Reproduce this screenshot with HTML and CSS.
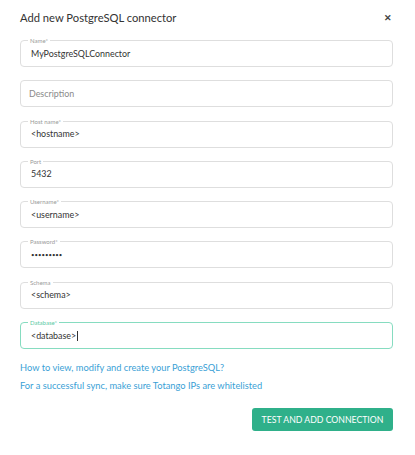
FILE: index.html
```html
<!DOCTYPE html>
<html lang="en">
<head>
    <meta charset="UTF-8">
    <meta name="viewport" content="width=device-width, initial-scale=1.0">
    <title>Add new PostgreSQL connector</title>
    <link rel="stylesheet" href="styles.css">
</head>
<body>
    <div class="dialog">
        <div class="dialog-header">
            <h1>Add new PostgreSQL connector</h1>
            <span class="close">&#10005;</span>
        </div>

        <div class="field">
            <span class="field-label">Name*</span>
            <span class="value">MyPostgreSQLConnector</span>
        </div>
        <div class="field">
            <span class="placeholder">Description</span>
        </div>
        <div class="field">
            <span class="field-label">Host name*</span>
            <span class="value">&lt;hostname&gt;</span>
        </div>
        <div class="field">
            <span class="field-label">Port</span>
            <span class="value">5432</span>
        </div>
        <div class="field">
            <span class="field-label">Username*</span>
            <span class="value">&lt;username&gt;</span>
        </div>
        <div class="field">
            <span class="field-label">Password*</span>
            <span class="value dots">&#8226;&#8226;&#8226;&#8226;&#8226;&#8226;&#8226;&#8226;&#8226;</span>
        </div>
        <div class="field">
            <span class="field-label">Schema</span>
            <span class="value">&lt;schema&gt;</span>
        </div>
        <div class="field focused">
            <span class="field-label">Database*</span>
            <span class="value">&lt;database&gt;<span class="caret"></span></span>
        </div>

        <div class="links">
            <a href="#">How to view, modify and create your PostgreSQL?</a>
            <a href="#">For a successful sync, make sure Totango IPs are whitelisted</a>
        </div>

        <div class="actions">
            <button type="button">TEST AND ADD CONNECTION</button>
        </div>
    </div>
</body>
</html>
```

FILE: styles.css
```css
body {
    font-family: Lato, "Open Sans", sans-serif;
    margin: 0;
    padding: 0;
    background-color: #fff;
}

.dialog {
    padding: 9px 22px 0 20px;
}

.dialog-header {
    display: flex;
    justify-content: space-between;
    align-items: center;
    height: 16px;
    margin-bottom: 15px;
}

h1 {
    margin: 0;
    font-size: 11.2px;
    font-weight: 400;
    color: #333;
    padding-top: 1px;
}

.close {
    font-size: 9px;
    font-weight: bold;
    color: #444;
    margin-right: 1px;
}

.field {
    position: relative;
    display: flex;
    align-items: center;
    height: 27px;
    margin-bottom: 13.3px;
    padding: 0 10px 1px;
    border: 1px solid #dedede;
    border-radius: 4px;
    box-sizing: border-box;
}

.field-label {
    position: absolute;
    top: -4px;
    left: 7px;
    padding: 0 2px;
    background-color: #fff;
    font-size: 6px;
    line-height: 7px;
    color: #9a9a9a;
}

.value {
    font-size: 8.9px;
    color: #333;
}

.placeholder {
    font-size: 8.9px;
    color: #8a8a8a;
    padding-top: 1px;
    margin-left: -2px;
}

.dots {
    font-size: 6px;
    letter-spacing: 0;
}

.caret {
    display: inline-block;
    width: 1px;
    height: 10px;
    margin-left: 1px;
    background-color: #333;
    vertical-align: -2px;
}

.focused {
    border-color: #86dcc0;
}

.focused .field-label {
    color: #5ccaa4;
}

.links {
    display: flex;
    flex-direction: column;
    gap: 7px;
    margin-top: 1px;
}

.links a {
    font-size: 9.3px;
    color: #3a9fd6;
    text-decoration: none;
}

.actions {
    display: flex;
    justify-content: flex-end;
    margin-top: 17px;
}

button {
    font-family: inherit;
    font-size: 8.7px;
    color: #fff;
    background-color: #2fb08a;
    border: none;
    border-radius: 3px;
    width: 141px;
    height: 23px;
    cursor: pointer;
}
```
